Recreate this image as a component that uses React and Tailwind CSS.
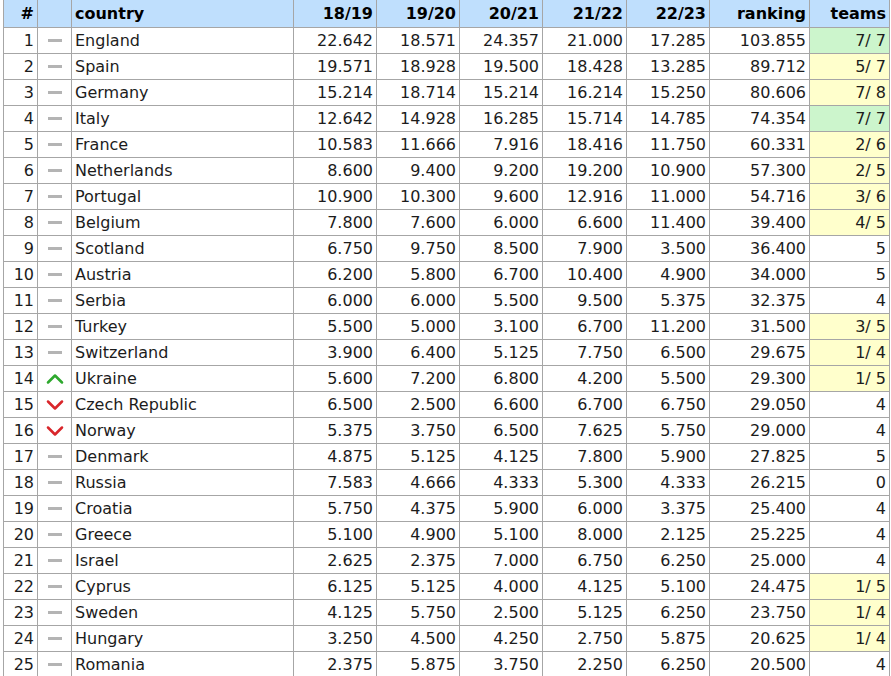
import { ChevronUp, ChevronDown } from "lucide-react";

// ─── data ─────────────────────────────────────────────────────────────────────
const ROWS = [
  ["England", "same", "22.642", "18.571", "24.357", "21.000", "17.285", "103.855", "7/ 7", "green"],
  ["Spain", "same", "19.571", "18.928", "19.500", "18.428", "13.285", "89.712", "5/ 7", "yellow"],
  ["Germany", "same", "15.214", "18.714", "15.214", "16.214", "15.250", "80.606", "7/ 8", "yellow"],
  ["Italy", "same", "12.642", "14.928", "16.285", "15.714", "14.785", "74.354", "7/ 7", "green"],
  ["France", "same", "10.583", "11.666", "7.916", "18.416", "11.750", "60.331", "2/ 6", "yellow"],
  ["Netherlands", "same", "8.600", "9.400", "9.200", "19.200", "10.900", "57.300", "2/ 5", "yellow"],
  ["Portugal", "same", "10.900", "10.300", "9.600", "12.916", "11.000", "54.716", "3/ 6", "yellow"],
  ["Belgium", "same", "7.800", "7.600", "6.000", "6.600", "11.400", "39.400", "4/ 5", "yellow"],
  ["Scotland", "same", "6.750", "9.750", "8.500", "7.900", "3.500", "36.400", "5", ""],
  ["Austria", "same", "6.200", "5.800", "6.700", "10.400", "4.900", "34.000", "5", ""],
  ["Serbia", "same", "6.000", "6.000", "5.500", "9.500", "5.375", "32.375", "4", ""],
  ["Turkey", "same", "5.500", "5.000", "3.100", "6.700", "11.200", "31.500", "3/ 5", "yellow"],
  ["Switzerland", "same", "3.900", "6.400", "5.125", "7.750", "6.500", "29.675", "1/ 4", "yellow"],
  ["Ukraine", "up", "5.600", "7.200", "6.800", "4.200", "5.500", "29.300", "1/ 5", "yellow"],
  ["Czech Republic", "down", "6.500", "2.500", "6.600", "6.700", "6.750", "29.050", "4", ""],
  ["Norway", "down", "5.375", "3.750", "6.500", "7.625", "5.750", "29.000", "4", ""],
  ["Denmark", "same", "4.875", "5.125", "4.125", "7.800", "5.900", "27.825", "5", ""],
  ["Russia", "same", "7.583", "4.666", "4.333", "5.300", "4.333", "26.215", "0", ""],
  ["Croatia", "same", "5.750", "4.375", "5.900", "6.000", "3.375", "25.400", "4", ""],
  ["Greece", "same", "5.100", "4.900", "5.100", "8.000", "2.125", "25.225", "4", ""],
  ["Israel", "same", "2.625", "2.375", "7.000", "6.750", "6.250", "25.000", "4", ""],
  ["Cyprus", "same", "6.125", "5.125", "4.000", "4.125", "5.100", "24.475", "1/ 5", "yellow"],
  ["Sweden", "same", "4.125", "5.750", "2.500", "5.125", "6.250", "23.750", "1/ 4", "yellow"],
  ["Hungary", "same", "3.250", "4.500", "4.250", "2.750", "5.875", "20.625", "1/ 4", "yellow"],
  ["Romania", "same", "2.375", "5.875", "3.750", "2.250", "6.250", "20.500", "4", ""],
];

const SEASONS = ["18/19", "19/20", "20/21", "21/22", "22/23"];

const TEAM_BG = {
  green: "bg-[#ccf5cc]",
  yellow: "bg-[#ffffcc]",
  "": "bg-white",
};

// 순위 변동 아이콘 — 셀 높이를 늘리지 않도록 고정 높이 래퍼 안에 둠
function Trend({ dir }) {
  return (
    <div className="flex h-[16px] items-center justify-center">
      {dir === "up" && (
        <ChevronUp size={28} strokeWidth={2.2} className="shrink-0 text-[#2ea82e]" />
      )}
      {dir === "down" && (
        <ChevronDown size={28} strokeWidth={2.2} className="shrink-0 text-[#d9262b]" />
      )}
      {dir === "same" && <div className="h-[3px] w-[14px] bg-[#b4b4b4]" />}
    </div>
  );
}

const cell = "border border-[#a6a6a6] px-[3px] py-0";

export default function App() {
  return (
    <div className="h-[676px] overflow-hidden bg-white pl-[3px] font-['DejaVu_Sans',Verdana,sans-serif] text-[16px] leading-[25px] text-[#1c1c1c]">
      <table className="table-fixed border-collapse -mt-px w-[886px]">
        <colgroup>
          <col className="w-[34px]" />
          <col className="w-[34px]" />
          <col className="w-[222px]" />
          <col className="w-[83px]" />
          <col className="w-[83px]" />
          <col className="w-[83px]" />
          <col className="w-[84px]" />
          <col className="w-[83px]" />
          <col className="w-[100px]" />
          <col className="w-[80px]" />
        </colgroup>
        <thead>
          <tr className="h-[28px] bg-[#bfdffd] font-bold text-black">
            <th className={`${cell} text-right`}>#</th>
            <th className={cell}></th>
            <th className={`${cell} text-left`}>country</th>
            {SEASONS.map((s) => (
              <th key={s} className={`${cell} text-right`}>
                {s}
              </th>
            ))}
            <th className={`${cell} text-right`}>ranking</th>
            <th className={`${cell} text-right`}>teams</th>
          </tr>
        </thead>
        <tbody>
          {ROWS.map((r, i) => (
            <tr key={r[0]} className="h-[26px]">
              <td className={`${cell} text-right`}>{i + 1}</td>
              <td className={cell}>
                <Trend dir={r[1]} />
              </td>
              <td className={`${cell} text-left whitespace-nowrap`}>{r[0]}</td>
              {r.slice(2, 8).map((v, j) => (
                <td key={j} className={`${cell} text-right`}>
                  {v}
                </td>
              ))}
              <td className={`${cell} text-right whitespace-pre ${TEAM_BG[r[9]]}`}>{r[8]}</td>
            </tr>
          ))}
        </tbody>
      </table>
    </div>
  );
}
